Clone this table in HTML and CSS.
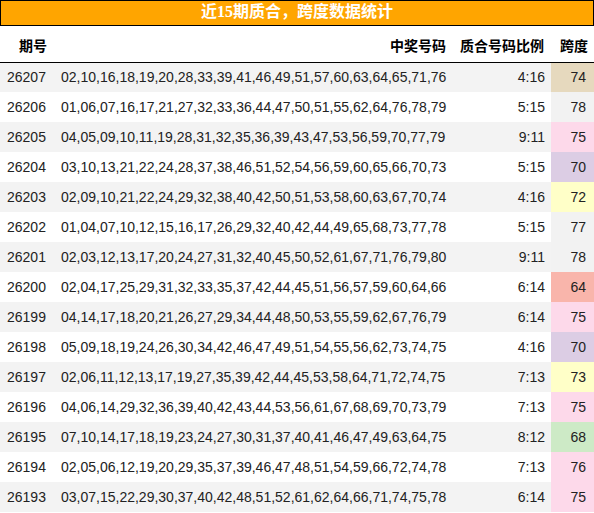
FILE: index.html
```html
<!DOCTYPE html>
<html lang="zh">
<head>
<meta charset="utf-8">
<title>近15期质合，跨度数据统计</title>
<link rel="stylesheet" href="styles.css">
</head>
<body>
<div class="wrap">
  <div class="title">近15期质合，跨度数据统计</div>
  <table class="stats">
    <colgroup>
      <col class="c-issue"><col class="c-nums"><col class="c-ratio"><col class="c-span">
    </colgroup>
    <thead>
      <tr><th>期号</th><th>中奖号码</th><th>质合号码比例</th><th>跨度</th></tr>
    </thead>
    <tbody>
      <tr><td>26207</td><td class="nums">02,10,16,18,19,20,28,33,39,41,46,49,51,57,60,63,64,65,71,76</td><td class="r">4:16</td><td class="span s-tan">74</td></tr>
      <tr><td>26206</td><td class="nums">01,06,07,16,17,21,27,32,33,36,44,47,50,51,55,62,64,76,78,79</td><td class="r">5:15</td><td class="span s-gray">78</td></tr>
      <tr><td>26205</td><td class="nums">04,05,09,10,11,19,28,31,32,35,36,39,43,47,53,56,59,70,77,79</td><td class="r">9:11</td><td class="span s-pink">75</td></tr>
      <tr><td>26204</td><td class="nums">03,10,13,21,22,24,28,37,38,46,51,52,54,56,59,60,65,66,70,73</td><td class="r">5:15</td><td class="span s-purple">70</td></tr>
      <tr><td>26203</td><td class="nums">02,09,10,21,22,24,29,32,38,40,42,50,51,53,58,60,63,67,70,74</td><td class="r">4:16</td><td class="span s-yellow">72</td></tr>
      <tr><td>26202</td><td class="nums">01,04,07,10,12,15,16,17,26,29,32,40,42,44,49,65,68,73,77,78</td><td class="r">5:15</td><td class="span s-gray">77</td></tr>
      <tr><td>26201</td><td class="nums">02,03,12,13,17,20,24,27,31,32,40,45,50,52,61,67,71,76,79,80</td><td class="r">9:11</td><td class="span s-gray">78</td></tr>
      <tr><td>26200</td><td class="nums">02,04,17,25,29,31,32,33,35,37,42,44,45,51,56,57,59,60,64,66</td><td class="r">6:14</td><td class="span s-red">64</td></tr>
      <tr><td>26199</td><td class="nums">04,14,17,18,20,21,26,27,29,34,44,48,50,53,55,59,62,67,76,79</td><td class="r">6:14</td><td class="span s-pink">75</td></tr>
      <tr><td>26198</td><td class="nums">05,09,18,19,24,26,30,34,42,46,47,49,51,54,55,56,62,73,74,75</td><td class="r">4:16</td><td class="span s-purple">70</td></tr>
      <tr><td>26197</td><td class="nums">02,06,11,12,13,17,19,27,35,39,42,44,45,53,58,64,71,72,74,75</td><td class="r">7:13</td><td class="span s-yellow">73</td></tr>
      <tr><td>26196</td><td class="nums">04,06,14,29,32,36,39,40,42,43,44,53,56,61,67,68,69,70,73,79</td><td class="r">7:13</td><td class="span s-pink">75</td></tr>
      <tr><td>26195</td><td class="nums">07,10,14,17,18,19,23,24,27,30,31,37,40,41,46,47,49,63,64,75</td><td class="r">8:12</td><td class="span s-green">68</td></tr>
      <tr><td>26194</td><td class="nums">02,05,06,12,19,20,29,35,37,39,46,47,48,51,54,59,66,72,74,78</td><td class="r">7:13</td><td class="span s-pink">76</td></tr>
      <tr><td>26193</td><td class="nums">03,07,15,22,29,30,37,40,42,48,51,52,61,62,64,66,71,74,75,78</td><td class="r">6:14</td><td class="span s-pink">75</td></tr>
    </tbody>
  </table>
</div>
</body>
</html>
```
FILE: styles.css
```css
html, body {
  margin: 0;
  padding: 0;
  background: #ffffff;
}
.wrap {
  width: 594px;
}
.title {
  box-sizing: border-box;
  height: 26px;
  border: 1px solid #000;
  background: #ffa500;
  color: #ffffff;
  font-family: "Liberation Serif", "Noto Sans CJK SC", serif;
  font-weight: bold;
  font-size: 16px;
  line-height: 22px;
  text-align: center;
}
.stats {
  width: 594px;
  border-collapse: collapse;
  table-layout: fixed;
  font-family: "Liberation Sans", "Noto Sans CJK SC", sans-serif;
  font-size: 14px;
  color: #222;
}
.c-issue { width: 54px; }
.c-nums { width: 399px; }
.c-ratio { width: 98px; }
.c-span { width: 43px; }
.stats th {
  height: 36px;
  padding: 3px 7px 0 7px;
  box-sizing: border-box;
  text-align: right;
  font-family: "Noto Sans CJK SC", sans-serif;
  font-weight: bold;
  font-size: 14px;
  color: #000;
  border-bottom: 1px solid #000;
  white-space: nowrap;
}
.stats th:last-child {
  padding-right: 6px;
}
.stats td {
  height: 30px;
  padding: 0 7px;
  box-sizing: border-box;
  white-space: nowrap;
  text-align: left;
}
.stats td.r {
  text-align: right;
  padding-right: 6px;
}
.stats td.span {
  text-align: right;
  padding-right: 8px;
}
.stats tbody tr:nth-child(odd) {
  background: #f3f3f3;
}
.s-tan { background: #e6d9be; }
.s-gray { background: #f2f2f2; }
.s-pink { background: #fdd9ea; }
.s-purple { background: #dccde4; }
.s-yellow { background: #ffffc8; }
.s-red { background: #f9b5ab; }
.s-green { background: #cdeac6; }
```
